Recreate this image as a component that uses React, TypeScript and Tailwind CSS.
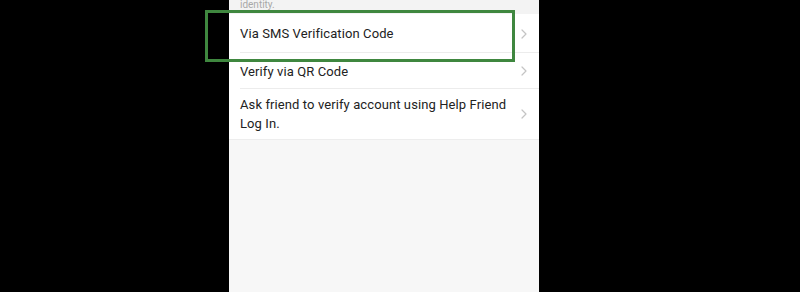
import React from 'react';

const Chevron = () => (
  <svg width="6" height="10" viewBox="0 0 6 10" className="shrink-0">
    <path d="M1 1l4 4-4 4" fill="none" stroke="#c4c4c4" strokeWidth="1.2" strokeLinecap="round" strokeLinejoin="round" />
  </svg>
);

interface RowProps {
  label: string;
  className?: string;
  divider?: boolean;
}

const Row: React.FC<RowProps> = ({ label, className = '', divider = true }) => (
  <div className={`relative flex items-center pl-[11px] pr-[12px] ${className}`}>
    <span className="flex-1 text-[13px] leading-[19px] tracking-[0.1px] text-[#222] pr-[10px]">{label}</span>
    <Chevron />
    {divider && <div className="absolute bottom-0 left-[11px] right-0 h-px bg-[#ececec]" />}
  </div>
);

export default function App() {
  return (
    <div className="relative w-[800px] h-[292px] bg-black overflow-hidden" style={{ fontFamily: 'Roboto, "Liberation Sans", sans-serif' }}>
      <div className="ml-[229px] w-[310px] h-full bg-[#f7f7f7] flex flex-col">
        <div className="h-[14px] bg-[#f3f3f3] pl-[11px] text-[10px] leading-[10px] text-[#a8a8a8] overflow-hidden">
          identity.
        </div>
        <div className="bg-white">
          <Row label="Via SMS Verification Code" className="h-[39px]" />
          <Row label="Verify via QR Code" className="h-[36px]" />
          <Row label="Ask friend to verify account using Help Friend Log In." className="h-[50px]" divider={false} />
        </div>
        <div className="h-px bg-[#ededed]" />
      </div>
      <div className="absolute left-[205px] top-[10px] w-[310px] h-[52px] border-[3px] border-[#3f873f]" />
    </div>
  );
}
